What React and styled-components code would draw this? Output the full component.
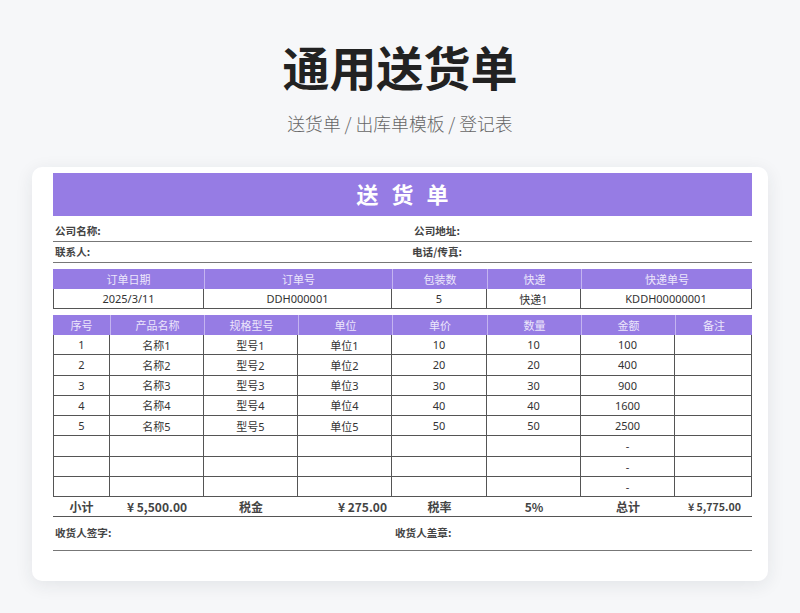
import React from "react";
import styled, { createGlobalStyle } from "styled-components";

const Global = createGlobalStyle`
  html, body { margin: 0; padding: 0; background: #f6f7f9; }
  body { font-family: "Noto Sans", "Noto Sans CJK SC", sans-serif; }
`;

const Page = styled.div`
  width: 800px;
  height: 613px;
  overflow: hidden;
  display: flex;
  flex-direction: column;
  align-items: center;
  background: #f6f7f9;
`;
const Title = styled.h1`
  margin: 32px 0 0;
  height: 68px;
  line-height: 68px;
  font-family: "Noto Sans CJK SC", sans-serif;
  font-size: 47px;
  font-weight: 700;
  color: #222;
`;
const Subtitle = styled.p`
  margin: 9px 0 0;
  height: 28px;
  line-height: 28px;
  font-family: "Noto Sans CJK SC", sans-serif;
  font-size: 17.8px;
  font-weight: 300;
  color: #666;
`;
const Card = styled.div`
  margin-top: 30px;
  width: 736px;
  height: 414px;
  box-sizing: border-box;
  padding: 6px 16px 0 21px;
  background: #fff;
  border-radius: 10px;
  box-shadow: 0 4px 18px rgba(30, 40, 60, 0.09);
`;
const Banner = styled.div`
  height: 43px;
  box-sizing: border-box;
  display: flex;
  align-items: center;
  justify-content: center;
  background: #967ce4;
  color: #fff;
  font-family: "Noto Sans CJK SC", sans-serif;
  font-size: 22px;
  font-weight: 700;
  letter-spacing: 13px;
  padding: 0 0 3px 13px;
`;
const FieldRow = styled.div`
  height: ${(p) => p.$h}px;
  box-sizing: border-box;
  padding-top: ${(p) => p.$pad || 0}px;
  display: flex;
  align-items: center;
  border-bottom: 1px solid #777;
  font-family: "Noto Sans CJK SC", sans-serif;
  font-size: 10.6px;
  font-weight: 700;
  color: #444;
`;
const Field = styled.span`
  width: ${(p) => p.$w}px;
  padding-left: ${(p) => (p.$center ? 0 : 2)}px;
  text-align: ${(p) => (p.$center ? "center" : "left")};
  box-sizing: border-box;
  flex: none;
`;
const Grid = styled.div`
  display: grid;
  grid-template-columns: ${(p) => p.$cols};
  margin-top: ${(p) => p.$top}px;
`;
const Head = styled.div`
  height: 20px;
  display: flex;
  align-items: center;
  justify-content: center;
  background: #967ce4;
  color: #ece6fb;
  font-family: "Noto Sans CJK SC", sans-serif;
  font-size: 11px;
  border-left: 1px solid #c4b4f0;
  box-sizing: border-box;
  &:first-child { border-left: 0; }
`;
const Cell = styled.div`
  height: ${(p) => p.$h || 20.25}px;
  box-sizing: border-box;
  display: flex;
  align-items: center;
  justify-content: center;
  font-size: 11px;
  color: #333;
  border-right: 1px solid #555;
  border-bottom: 1px solid #555;
  border-left: ${(p) => (p.$first ? "1px solid #555" : "0")};
`;
const Total = styled.div`
  height: 20px;
  box-sizing: border-box;
  display: flex;
  align-items: center;
  justify-content: ${(p) => (p.$right ? "flex-end" : "center")};
  padding-right: ${(p) => (p.$right ? p.$right : 0)}px;
  font-family: "Noto Sans CJK SC", sans-serif;
  font-size: ${(p) => p.$size || 12}px;
  font-weight: 700;
  color: #444;
  border-bottom: 1px solid #555;
`;
const SignRow = styled.div`
  height: 34px;
  box-sizing: border-box;
  display: flex;
  align-items: flex-start;
  padding-top: 8px;
  border-bottom: 1px solid #777;
  font-family: "Noto Sans CJK SC", sans-serif;
  font-size: 10.6px;
  font-weight: 700;
  color: #444;
`;

const orderCols = "151px 188px 95px 94px 171px";
const itemCols = "57px 94px 94px 94px 95px 94px 94px 77px";
const orderHead = ["订单日期", "订单号", "包装数", "快递", "快递单号"];
const orderRow = ["2025/3/11", "DDH000001", "5", "快递1", "KDDH00000001"];
const itemHead = ["序号", "产品名称", "规格型号", "单位", "单价", "数量", "金额", "备注"];
const rows = [
  ["1", "名称1", "型号1", "单位1", "10", "10", "100", ""],
  ["2", "名称2", "型号2", "单位2", "20", "20", "400", ""],
  ["3", "名称3", "型号3", "单位3", "30", "30", "900", ""],
  ["4", "名称4", "型号4", "单位4", "40", "40", "1600", ""],
  ["5", "名称5", "型号5", "单位5", "50", "50", "2500", ""],
  ["", "", "", "", "", "", "-", ""],
  ["", "", "", "", "", "", "-", ""],
  ["", "", "", "", "", "", "-", ""],
];
const totals = [
  { t: "小计" },
  { t: "¥ 5,500.00" },
  { t: "税金" },
  { t: "¥ 275.00", right: 5 },
  { t: "税率" },
  { t: "5%" },
  { t: "总计" },
  { t: "¥ 5,775.00", right: 11, size: 10.6 },
];

export default function App() {
  return (
    <Page>
      <Global />
      <Title>通用送货单</Title>
      <Subtitle>送货单 / 出库单模板 / 登记表</Subtitle>
      <Card>
        <Banner>送货单</Banner>
        <FieldRow $h={26} $pad={3}>
          <Field $w={334}>公司名称:</Field>
          <Field $w={100} $center>公司地址:</Field>
        </FieldRow>
        <FieldRow $h={20.5}>
          <Field $w={334}>联系人:</Field>
          <Field $w={100} $center>电话/传真:</Field>
        </FieldRow>
        <Grid $cols={orderCols} $top={6.5}>
          {orderHead.map((t) => <Head key={t}>{t}</Head>)}
          {orderRow.map((t, i) => <Cell key={t} $first={i === 0} $h={20}>{t}</Cell>)}
        </Grid>
        <Grid $cols={itemCols} $top={6}>
          {itemHead.map((t) => <Head key={t}>{t}</Head>)}
          {rows.map((r, y) =>
            r.map((t, x) => <Cell key={`${y}-${x}`} $first={x === 0}>{t}</Cell>)
          )}
          {totals.map(({ t, right, size }) => <Total key={t} $right={right} $size={size}>{t}</Total>)}
        </Grid>
        <SignRow>
          <Field $w={340}>收货人签字:</Field>
          <Field $w={200}>收货人盖章:</Field>
        </SignRow>
      </Card>
    </Page>
  );
}
